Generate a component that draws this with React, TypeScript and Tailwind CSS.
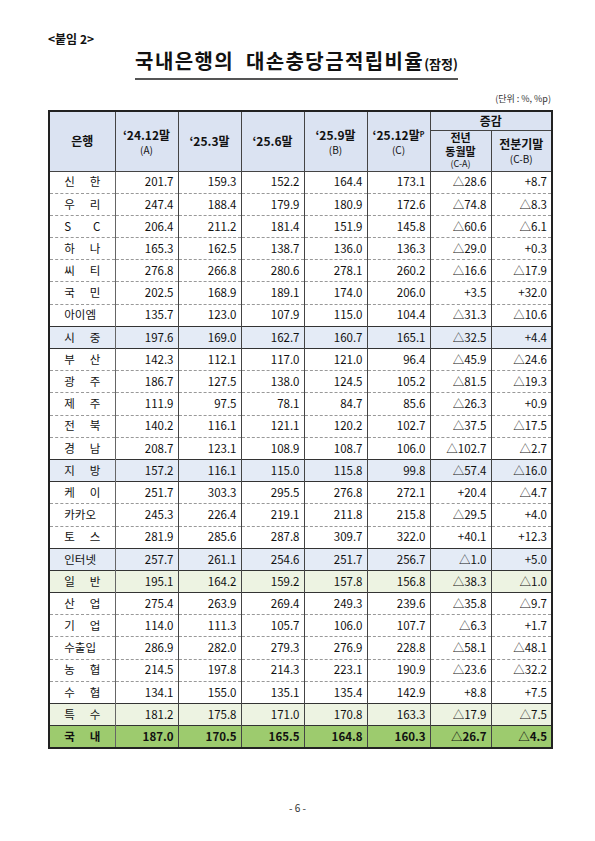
type Kind = "n" | "blue" | "lgreen" | "total";

const rows: [string, string[], Kind][] = [
  ["신한", ["201.7", "159.3", "152.2", "164.4", "173.1", "△28.6", "+8.7"], "n"],
  ["우리", ["247.4", "188.4", "179.9", "180.9", "172.6", "△74.8", "△8.3"], "n"],
  ["SC", ["206.4", "211.2", "181.4", "151.9", "145.8", "△60.6", "△6.1"], "n"],
  ["하나", ["165.3", "162.5", "138.7", "136.0", "136.3", "△29.0", "+0.3"], "n"],
  ["씨티", ["276.8", "266.8", "280.6", "278.1", "260.2", "△16.6", "△17.9"], "n"],
  ["국민", ["202.5", "168.9", "189.1", "174.0", "206.0", "+3.5", "+32.0"], "n"],
  ["아이엠", ["135.7", "123.0", "107.9", "115.0", "104.4", "△31.3", "△10.6"], "n"],
  ["시중", ["197.6", "169.0", "162.7", "160.7", "165.1", "△32.5", "+4.4"], "blue"],
  ["부산", ["142.3", "112.1", "117.0", "121.0", "96.4", "△45.9", "△24.6"], "n"],
  ["광주", ["186.7", "127.5", "138.0", "124.5", "105.2", "△81.5", "△19.3"], "n"],
  ["제주", ["111.9", "97.5", "78.1", "84.7", "85.6", "△26.3", "+0.9"], "n"],
  ["전북", ["140.2", "116.1", "121.1", "120.2", "102.7", "△37.5", "△17.5"], "n"],
  ["경남", ["208.7", "123.1", "108.9", "108.7", "106.0", "△102.7", "△2.7"], "n"],
  ["지방", ["157.2", "116.1", "115.0", "115.8", "99.8", "△57.4", "△16.0"], "blue"],
  ["케이", ["251.7", "303.3", "295.5", "276.8", "272.1", "+20.4", "△4.7"], "n"],
  ["카카오", ["245.3", "226.4", "219.1", "211.8", "215.8", "△29.5", "+4.0"], "n"],
  ["토스", ["281.9", "285.6", "287.8", "309.7", "322.0", "+40.1", "+12.3"], "n"],
  ["인터넷", ["257.7", "261.1", "254.6", "251.7", "256.7", "△1.0", "+5.0"], "blue"],
  ["일반", ["195.1", "164.2", "159.2", "157.8", "156.8", "△38.3", "△1.0"], "lgreen"],
  ["산업", ["275.4", "263.9", "269.4", "249.3", "239.6", "△35.8", "△9.7"], "n"],
  ["기업", ["114.0", "111.3", "105.7", "106.0", "107.7", "△6.3", "+1.7"], "n"],
  ["수출입", ["286.9", "282.0", "279.3", "276.9", "228.8", "△58.1", "△48.1"], "n"],
  ["농협", ["214.5", "197.8", "214.3", "223.1", "190.9", "△23.6", "△32.2"], "n"],
  ["수협", ["134.1", "155.0", "135.1", "135.4", "142.9", "+8.8", "+7.5"], "n"],
  ["특수", ["181.2", "175.8", "171.0", "170.8", "163.3", "△17.9", "△7.5"], "lgreen"],
  ["국내", ["187.0", "170.5", "165.5", "164.8", "160.3", "△26.7", "△4.5"], "total"],
];

const rowBg: Record<Kind, string> = {
  n: "bg-white",
  blue: "bg-[#e4ebf6]",
  lgreen: "bg-[#edf3e2]",
  total: "bg-[#9dcb6e] font-bold",
};

function BankName({ name }: { name: string }) {
  const chars = name === "SC" ? ["S", "C"] : name.split("");
  if (chars.length > 2) {
    return <div className="mx-auto w-[36px] whitespace-nowrap text-left">{name}</div>;
  }
  return (
    <div className="mx-auto flex w-[36px] justify-between">
      {chars.map((c, i) => (
        <span key={i}>{c}</span>
      ))}
    </div>
  );
}

export default function App() {
  const th = "border border-[#444] border-t-2 border-t-[#222] bg-[#dbe3f2] text-center align-middle";
  return (
    <div
      className="min-h-[841px] w-[595px] bg-white text-[#111]"
      style={{ fontFamily: '"Noto Sans CJK KR", "Noto Sans", sans-serif' }}
    >
      <div className="ml-[48px] w-[503px] pt-[31px]">
        <p className="text-[12px] font-semibold leading-[16px]">&lt;붙임 2&gt;</p>
        <div className="mt-[1px] flex justify-center pr-[6px]">
          <h1 className="border-b-2 border-[#555] pb-[1px] text-[20px] font-semibold leading-[26px] tracking-[1.4px]">
            국내은행의&nbsp;&nbsp;대손충당금적립비율
            <span className="text-[13px] tracking-normal">(잠정)</span>
          </h1>
        </div>
        <p className="mt-[13px] text-right text-[9px] leading-[12px] text-[#333]">(단위 : %, %p)</p>
        <table className="mt-[5px] w-[503px] table-fixed border-collapse text-[11.5px] leading-none">
          <colgroup>
            <col className="w-[66px]" />
            <col className="w-[63px]" />
            <col className="w-[63px]" />
            <col className="w-[63px]" />
            <col className="w-[63px]" />
            <col className="w-[63px]" />
            <col className="w-[61px]" />
            <col className="w-[61px]" />
          </colgroup>
          <thead>
            <tr className="h-[19px]">
              <th rowSpan={2} className={`${th} border-l-2 border-l-[#222] text-[12px] font-bold`}>
                은행
              </th>
              <th rowSpan={2} className={th}>
                <div className="text-[12px] font-bold leading-[17px]">‘24.12말</div>
                <div className="text-[10px] font-normal leading-[13px]">(A)</div>
              </th>
              <th rowSpan={2} className={`${th} text-[12px] font-bold`}>
                ‘25.3말
              </th>
              <th rowSpan={2} className={`${th} text-[12px] font-bold`}>
                ‘25.6말
              </th>
              <th rowSpan={2} className={th}>
                <div className="text-[12px] font-bold leading-[17px]">‘25.9말</div>
                <div className="text-[10px] font-normal leading-[13px]">(B)</div>
              </th>
              <th rowSpan={2} className={th}>
                <div className="text-[12px] font-bold leading-[17px]">
                  ‘25.12말<sup className="text-[7px]">P</sup>
                </div>
                <div className="text-[10px] font-normal leading-[13px]">(C)</div>
              </th>
              <th colSpan={2} className={`${th} border-r-2 border-r-[#222] text-[12px] font-bold`}>
                증감
              </th>
            </tr>
            <tr className="h-[41px]">
              <th className="border border-[#444] bg-[#dbe3f2] text-center align-middle">
                <div className="text-[11px] font-bold leading-[13.5px]">전년</div>
                <div className="text-[11px] font-bold leading-[13.5px]">동월말</div>
                <div className="text-[9px] font-normal leading-[12px]">(C-A)</div>
              </th>
              <th className="border border-[#444] border-r-2 border-r-[#222] bg-[#dbe3f2] text-center align-middle">
                <div className="text-[12px] font-bold leading-[16px]">전분기말</div>
                <div className="text-[10px] font-normal leading-[13px]">(C-B)</div>
              </th>
            </tr>
          </thead>
          <tbody>
            {rows.map(([name, vals, kind], i) => {
              const prev = i > 0 ? rows[i - 1][2] : "n";
              const heavy = i === 0 || kind !== "n" || prev !== "n";
              const top = heavy
                ? "border-t-[1.5px] [border-top-style:solid] border-t-[#333]"
                : "border-t [border-top-style:dashed] border-t-[#999]";
              const bottom = i === rows.length - 1 ? "border-b-2 border-b-[#222]" : "";
              return (
                <tr key={name} className={`h-[22.2px] ${rowBg[kind]}`}>
                  <td className={`border-x border-[#666] border-l-2 border-l-[#222] text-center ${top} ${bottom}`}>
                    <BankName name={name} />
                  </td>
                  {vals.map((v, j) => (
                    <td
                      key={j}
                      className={`border-x border-[#444] pr-[4px] text-right ${top} ${bottom} ${
                        j === vals.length - 1 ? "border-r-2 border-r-[#222]" : ""
                      }`}
                    >
                      {v}
                    </td>
                  ))}
                </tr>
              );
            })}
          </tbody>
        </table>
      </div>
      <p className="mt-[51px] text-center text-[10px] text-[#333]">- 6 -</p>
    </div>
  );
}
